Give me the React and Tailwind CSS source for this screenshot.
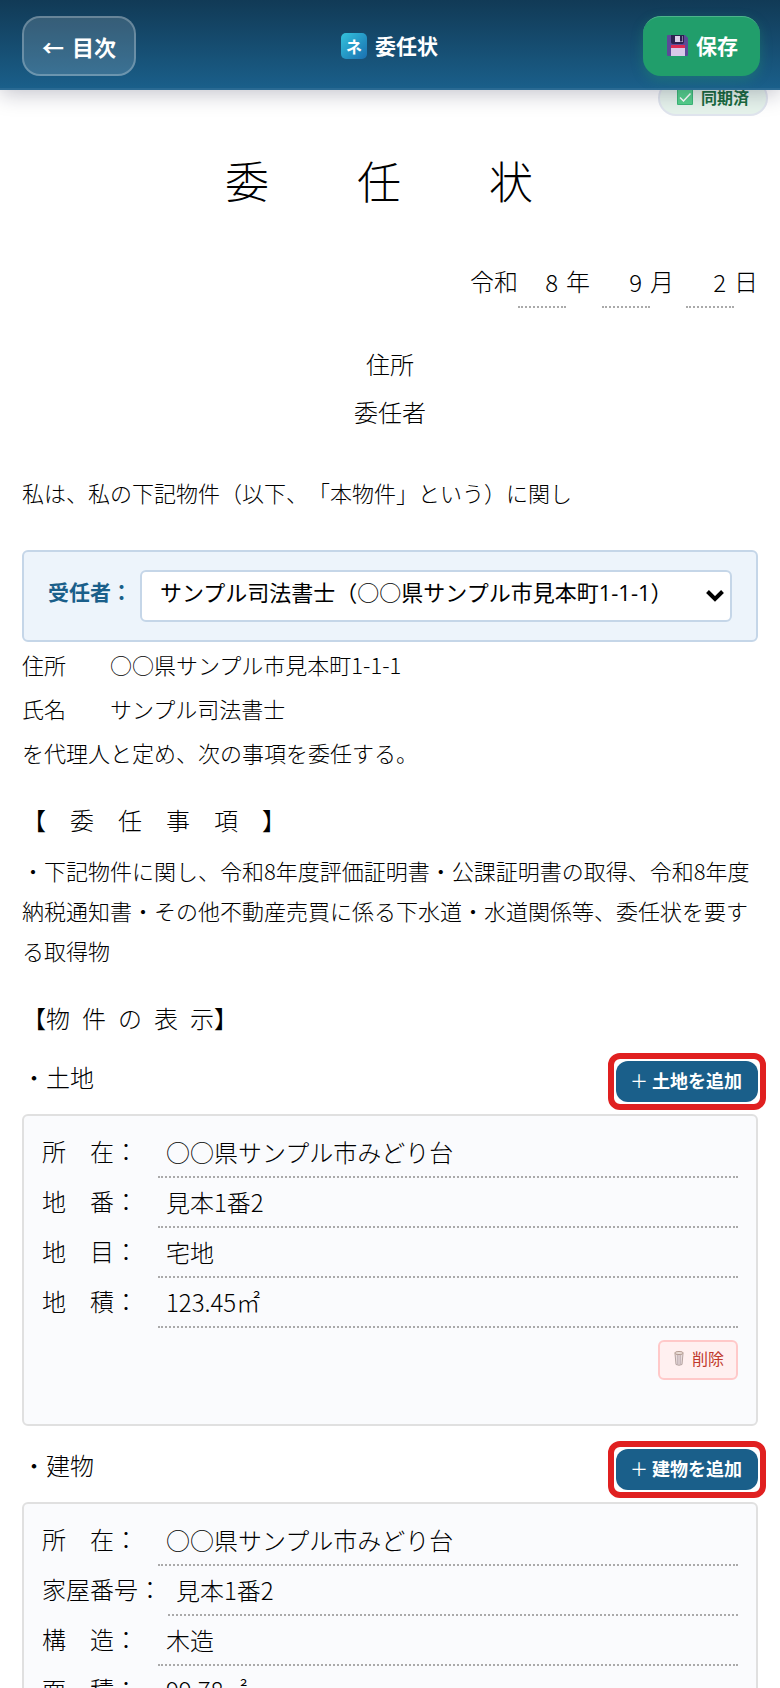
import { useState } from 'react';

const landFields = [
  { label: '所　在：', value: '○○県サンプル市みどり台' },
  { label: '地　番：', value: '見本1番2' },
  { label: '地　目：', value: '宅地' },
  { label: '地　積：', value: '123.45㎡' },
];

const buildingFields = [
  { label: '所　在：', value: '○○県サンプル市みどり台' },
  { label: '家屋番号：', value: '見本1番2' },
  { label: '構　造：', value: '木造' },
  { label: '面　積：', value: '99.78㎡' },
];

const agents = ['サンプル司法書士（○○県サンプル市見本町1-1-1）'];

function FloppyIcon() {
  return (
    <svg viewBox="0 0 21 21" className="w-[21px] h-[21px]" aria-hidden="true">
      <path d="M1 0h17l3 3v17a1 1 0 0 1-1 1H1a1 1 0 0 1-1-1V1a1 1 0 0 1 1-1z" fill="#5b4a97" />
      <path d="M4 0h13v7a2 2 0 0 1-2 2H6a2 2 0 0 1-2-2z" fill="#2b2250" />
      <path d="M8 1h8v6H8z" fill="#d9cfe8" />
      <path d="M13 1h2.500v5.500H13z" fill="#2b2250" />
      <path d="M4 10h14v11H4z" fill="#d8c9e8" />
      <path d="M4 10h14v3H4z" fill="#dc2a52" />
    </svg>
  );
}

function CheckIcon() {
  return (
    <svg viewBox="0 0 16 16" className="w-4 h-4" aria-hidden="true">
      <rect width="16" height="16" rx="1" fill="#3cb878" />
      <rect x="1" y="1" width="14" height="14" fill="#55d08c" />
      <path d="M3 8.500l3.500 3.500 7-7.500" fill="none" stroke="#fff" strokeWidth="1.500" />
    </svg>
  );
}

function TrashIcon() {
  return (
    <svg viewBox="0 0 10 15" className="w-[10px] h-[15px]" aria-hidden="true">
      <path d="M1 2.500l1 11q3 1.500 6 0l1-11z" fill="#e9dcdc" stroke="#b5a3a0" strokeWidth="1" />
      <path d="M3.500 4v9.500M5 4v9.500M6.500 4v9.500" stroke="#b9a8ae" strokeWidth="0.700" />
      <ellipse cx="5" cy="2" rx="4.300" ry="1.500" fill="#efe2dc" stroke="#a98f85" strokeWidth="0.900" />
    </svg>
  );
}

function DateField({ id, value, unit }) {
  return (
    <div className="flex">
      <input
        id={id}
        defaultValue={value}
        className="w-12 h-[50px] pr-2 pb-[2px] text-right border-b-2 border-dotted border-[#aaaaaa] outline-none"
      />
      <label htmlFor={id} className="leading-[46px]">{unit}</label>
    </div>
  );
}

function SectionHeader({ title, action, onClick }) {
  return (
    <div className="flex justify-between items-start">
      <h3 className="text-2xl leading-8">{title}</h3>
      <div className="relative">
        <button
          type="button"
          onClick={onClick}
          className="flex items-center gap-1 h-[41px] pl-[14px] pr-4 pb-1 rounded-xl bg-[#1a5f8a] text-white text-lg font-bold"
        >
          <span className="font-normal">＋</span>
          {action}
        </button>
        <div className="absolute -inset-2 border-6 border-[#e02020] rounded-xl pointer-events-none" />
      </div>
    </div>
  );
}

function PropertyCard({ prefix, fields }) {
  return (
    <div className="mt-3 px-[18px] pt-3 pb-11 border-2 border-[#e0e0e0] rounded-md bg-[#fafbfd] text-2xl">
      {fields.map((field, i) => (
        <div key={field.label} className="flex gap-[6px]">
          <label htmlFor={`${prefix}-${i}`} className="min-w-[110px] shrink-0 leading-[46px]">
            {field.label}
          </label>
          <input
            id={`${prefix}-${i}`}
            defaultValue={field.value}
            className="flex-1 min-w-0 h-[50px] px-2 pb-[2px] border-b-2 border-dotted border-[#aaaaaa] outline-none"
          />
        </div>
      ))}
      <div className="flex justify-end mt-3">
        <button
          type="button"
          className="flex items-center gap-2 h-10 pl-[14px] pr-3 pb-1 border-2 border-[#ffc9c9] rounded-md bg-[#fff0f0] text-[#c0392b] text-base font-normal"
        >
          <TrashIcon />
          削除
        </button>
      </div>
    </div>
  );
}

export default function App() {
  const [agent, setAgent] = useState(agents[0]);

  return (
    <div className="relative h-screen overflow-hidden bg-white text-black [font-family:'Noto_Sans_CJK_JP',sans-serif] font-light [text-spacing-trim:space-all]">
      <header className="relative z-20 flex items-center justify-between h-[90px] pl-[22px] pr-5 pt-1 bg-gradient-to-b from-[#113a56] to-[#1a5f8a] border-b-2 border-[#2a6a93] shadow-[0_4px_20px_rgba(20,20,50,0.25)] text-white font-bold">
        <a href="#toc" className="flex items-center gap-2 h-[60px] px-[18px] rounded-[18px] border-2 border-white/25 bg-white/15 text-[22px]">
          <span>←</span>
          目次
        </a>
        <h1 className="flex items-center gap-2 text-[21px]">
          <span className="flex items-center justify-center w-[26px] h-[26px] rounded-[5px] bg-gradient-to-br from-[#35c3dc] to-[#1b6fb0] text-base">
            ネ
          </span>
          委任状
        </h1>
        <button
          type="button"
          className="flex items-center gap-2 h-[60px] pl-6 pr-[22px] pb-[2px] rounded-[18px] bg-[#219e6b] border-t border-[#4db58b] shadow-[0_4px_12px_rgba(33,158,107,0.35)] text-[21px] font-bold"
        >
          <FloppyIcon />
          保存
        </button>
      </header>

      <div className="absolute z-10 top-20 right-3 flex items-center gap-2 h-9 px-[17px] pb-[2px] rounded-full border-2 border-[#e0e5ee] bg-[#e6f3ec] text-[#1a6b3f] text-base font-bold">
        <CheckIcon />
        同期済
      </div>

      <main className="px-[22px]">
        <h2 className="mt-[58px] pr-[22px] text-center text-[44px] leading-[64px]">委　　任　　状</h2>

        <div className="flex justify-end gap-3 mt-[46px] text-2xl">
          <div className="flex">
            <span className="leading-[46px]">令和</span>
            <DateField id="year" value="8" unit="年" />
          </div>
          <DateField id="month" value="9" unit="月" />
          <DateField id="day" value="2" unit="日" />
        </div>

        <div className="mt-8 text-center text-2xl leading-[48px]">
          <p>住所</p>
          <p>委任者</p>
        </div>

        <p className="mt-[34px] text-[22px] leading-[44px]">私は、私の下記物件（以下、「本物件」という）に関し</p>

        <div className="flex items-center gap-2 mt-9 px-6 py-[18px] border-2 border-[#c5d6e8] rounded-md bg-[#edf4fb]">
          <label htmlFor="agent" className="shrink-0 pb-2 text-[21px] font-bold text-[#1a5f8a]">
            受任者：
          </label>
          <div className="relative flex-1 min-w-0">
            <select
              id="agent"
              value={agent}
              onChange={(e) => setAgent(e.target.value)}
              className="appearance-none w-full h-[52px] pl-[18px] pr-10 pb-2 border-2 border-[#c5d6e8] rounded-md bg-white text-[22px] font-normal [font-family:'Open_Sans','Noto_Sans_CJK_JP',sans-serif]"
            >
              {agents.map((name) => (
                <option key={name}>{name}</option>
              ))}
            </select>
            <svg viewBox="0 0 18 12" className="absolute right-2 top-5 w-[18px] h-3 pointer-events-none" aria-hidden="true">
              <path d="M1.500 1.500L9 9l7.500-7.500" fill="none" stroke="#000" strokeWidth="4" />
            </svg>
          </div>
        </div>

        <div className="text-[22px] leading-[44px]">
          <p>住所　　○○県サンプル市見本町1-1-1</p>
          <p>氏名　　サンプル司法書士</p>
          <p>を代理人と定め、次の事項を委任する。</p>
        </div>

        <h3 className="mt-[22px] text-2xl leading-[48px]">【　委　任　事　項　】</h3>
        <p className="mt-[6px] text-[22px] leading-10">
          ・下記物件に関し、令和8年度評価証明書・公課証明書の取得、令和8年度納税通知書・その他不動産売買に係る下水道・水道関係等、委任状を要する取得物
        </p>

        <h3 className="mt-6 text-2xl leading-[48px]">【物&ensp;件&ensp;の&ensp;表&ensp;示】</h3>

        <div className="mt-[19px]">
          <SectionHeader title="・土地" action="土地を追加" />
          <PropertyCard prefix="land" fields={landFields} />
        </div>

        <div className="mt-[23px]">
          <SectionHeader title="・建物" action="建物を追加" />
          <PropertyCard prefix="building" fields={buildingFields} />
        </div>
      </main>
    </div>
  );
}
